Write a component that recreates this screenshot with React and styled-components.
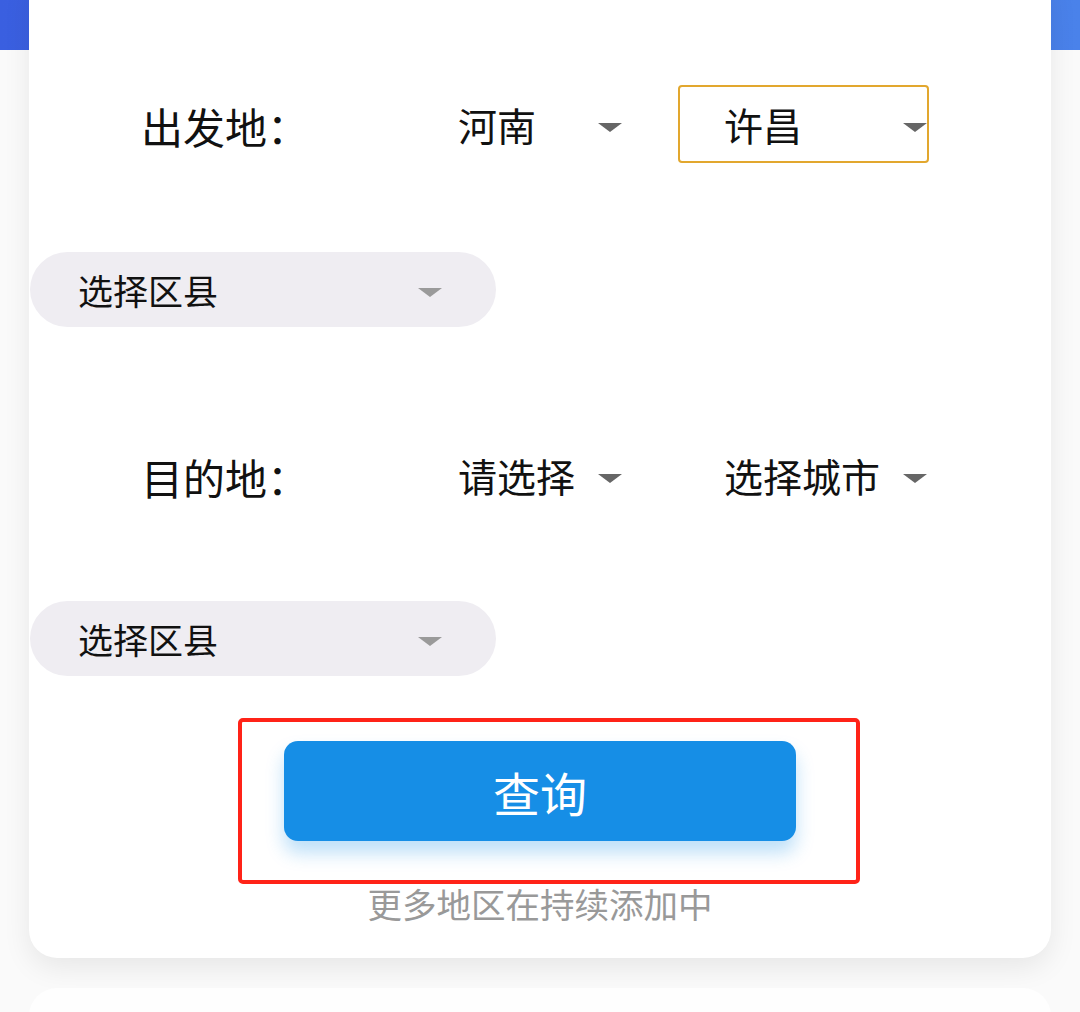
import React from "react";
import styled, { createGlobalStyle } from "styled-components";

const Global = createGlobalStyle`
  html, body { margin: 0; padding: 0; }
  body {
    background: #fafafa;
    font-family: "Noto Sans CJK SC", "Noto Sans", "Liberation Sans", sans-serif;
    overflow: hidden;
  }
`;

const Page = styled.div`
  width: 1080px;
  height: 1012px;
  overflow: hidden;
  position: relative;
`;

const Header = styled.div`
  height: 50px;
  background: linear-gradient(90deg, #3a5fe0 0%, #4a82ea 100%);
`;

const Card = styled.div`
  margin: -80px 29px 0;
  background: #ffffff;
  border-radius: 28px;
  box-shadow: 0 10px 28px rgba(0, 0, 0, 0.08);
  padding: 115px 0 36px;
  display: flex;
  flex-direction: column;
`;

const Row = styled.div`
  display: flex;
  align-items: center;
  height: 78px;
  padding-left: 112px;
  margin-top: ${(p) => p.$mt || 0}px;
`;

const Label = styled.div`
  width: 317px;
  font-size: 42px;
  color: #111;
  margin-top: 2px;
`;

const Select = styled.div`
  width: 164px;
  margin-right: 56px;
  display: flex;
  justify-content: space-between;
  align-items: center;
  font-size: 39px;
  color: #111;
`;

const BoxSelect = styled.div`
  width: 251px;
  height: 78px;
  box-sizing: border-box;
  border: 2px solid ${(p) => (p.$active ? "#e2a72e" : "transparent")};
  border-radius: 4px;
  padding-left: 44px;
  display: flex;
  justify-content: space-between;
  align-items: center;
  font-size: 39px;
  color: #111;
`;

const Arrow = styled.span`
  width: 0;
  height: 0;
  border-left: 12px solid transparent;
  border-right: 12px solid transparent;
  border-top: 9px solid ${(p) => p.$color || "#666"};
  margin-top: 6px;
`;

const Pill = styled.div`
  width: 466px;
  height: 75px;
  margin-left: 1px;
  margin-top: ${(p) => p.$mt}px;
  box-sizing: border-box;
  background: #efedf2;
  border-radius: 38px;
  padding: 0 54px 0 48px;
  display: flex;
  justify-content: space-between;
  align-items: center;
  font-size: 35px;
  color: #111;
`;

const Highlight = styled.div`
  margin: 42px 0 0 209px;
  width: 622px;
  height: 166px;
  box-sizing: border-box;
  border: 4px solid #ff2318;
  border-radius: 5px;
  padding: 19px 0 0 42px;
`;

const QueryButton = styled.button`
  width: 512px;
  height: 100px;
  border: none;
  border-radius: 14px;
  background: #168ee6;
  color: #fff;
  font-family: inherit;
  font-size: 47px;
  box-shadow: 0 12px 18px rgba(22, 142, 230, 0.28);
  display: flex;
  align-items: center;
  justify-content: center;
  padding: 0;
`;

const Note = styled.div`
  text-align: center;
  font-size: 34.5px;
  line-height: 38px;
  color: #999;
`;

const NextCard = styled.div`
  margin: 30px 29px 0;
  height: 120px;
  background: #fefefe;
  border-radius: 28px;
`;

export default function App() {
  return (
    <Page>
      <Global />
      <Header />
      <Card>
        <Row>
          <Label>出发地：</Label>
          <Select>
            <span>河南</span>
            <Arrow />
          </Select>
          <BoxSelect $active>
            <span>许昌</span>
            <Arrow />
          </BoxSelect>
        </Row>
        <Pill $mt={89}>
          <span>选择区县</span>
          <Arrow $color="#9a9a9a" />
        </Pill>
        <Row $mt={109}>
          <Label>目的地：</Label>
          <Select>
            <span>请选择</span>
            <Arrow />
          </Select>
          <BoxSelect>
            <span>选择城市</span>
            <Arrow />
          </BoxSelect>
        </Row>
        <Pill $mt={87}>
          <span>选择区县</span>
          <Arrow $color="#9a9a9a" />
        </Pill>
        <Highlight>
          <QueryButton>查询</QueryButton>
        </Highlight>
        <Note>更多地区在持续添加中</Note>
      </Card>
      <NextCard />
    </Page>
  );
}
